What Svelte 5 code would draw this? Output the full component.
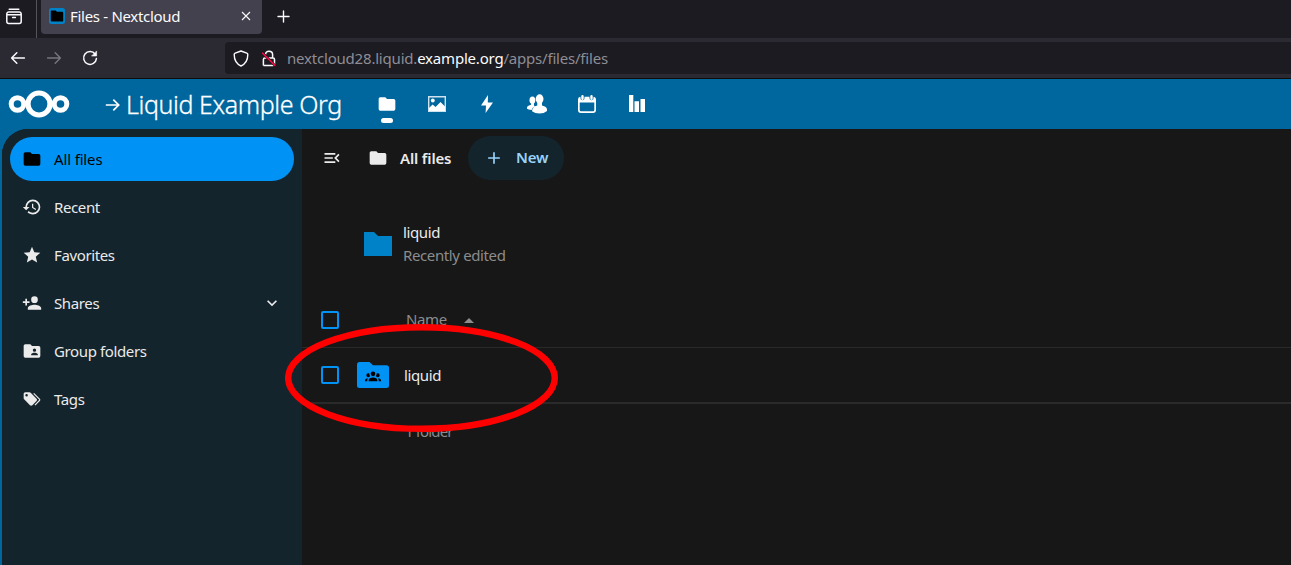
<script>
  const folder = 'M10,4H4C2.89,4 2,4.89 2,6V18A2,2 0 0,0 4,20H20A2,2 0 0,0 22,18V8C22,6.89 21.1,6 20,6H12L10,4Z';
  const group = 'M12,5.5A3.5,3.5 0 0,1 15.5,9A3.5,3.5 0 0,1 12,12.5A3.5,3.5 0 0,1 8.5,9A3.5,3.5 0 0,1 12,5.5M5,8C5.56,8 6.08,8.15 6.53,8.42C6.38,9.85 6.8,11.27 7.66,12.38C7.16,13.34 6.16,14 5,14A3,3 0 0,1 2,11A3,3 0 0,1 5,8M19,8A3,3 0 0,1 22,11A3,3 0 0,1 19,14C17.84,14 16.84,13.34 16.34,12.38C17.2,11.27 17.62,9.85 17.47,8.42C17.92,8.15 18.44,8 19,8M5.5,18.25C5.5,16.18 8.41,14.5 12,14.5C15.59,14.5 18.5,16.18 18.5,18.25V20H5.5V18.25M0,20V18.5C0,17.11 1.89,15.94 4.45,15.6C3.86,16.28 3.5,17.22 3.5,18.25V20H0M24,20H20.5V18.25C20.5,17.22 20.14,16.28 19.55,15.6C22.11,15.94 24,17.11 24,18.5V20Z';
  const nav = [
    { label: 'All files', icon: folder, active: true },
    { label: 'Recent', icon: 'M13.5,8H12V13L16.28,15.54L17,14.33L13.5,12.25V8M13,3A9,9 0 0,0 4,12H1L4.96,16.03L9,12H6A7,7 0 0,1 13,5A7,7 0 0,1 20,12A7,7 0 0,1 13,19C11.07,19 9.32,18.21 8.06,16.94L6.64,18.36C8.27,20 10.5,21 13,21A9,9 0 0,0 22,12A9,9 0 0,0 13,3' },
    { label: 'Favorites', icon: 'M12,17.27L18.18,21L16.54,13.97L22,9.24L14.81,8.62L12,2L9.19,8.62L2,9.24L7.45,13.97L5.82,21L12,17.27Z' },
    { label: 'Shares', expandable: true, icon: 'M15,14C12.33,14 7,15.33 7,18V20H23V18C23,15.33 17.67,14 15,14M6,10V7H4V10H1V12H4V15H6V12H9V10M15,12A4,4 0 0,0 19,8A4,4 0 0,0 15,4A4,4 0 0,0 11,8A4,4 0 0,0 15,12Z' },
    { label: 'Group folders', icon: 'M19,17H11V16C11,14.67 13.67,14 15,14C16.33,14 19,14.67 19,16M15,9A2,2 0 0,1 17,11A2,2 0 0,1 15,13A2,2 0 0,1 13,11C13,9.89 13.9,9 15,9M20,6H12L10,4H4C2.89,4 2,4.89 2,6V18A2,2 0 0,0 4,20H20A2,2 0 0,0 22,18V8C22,6.89 21.1,6 20,6Z' },
    { label: 'Tags', icon: 'M5.5,9A1.5,1.5 0 0,0 7,7.5A1.5,1.5 0 0,0 5.5,6A1.5,1.5 0 0,0 4,7.5A1.5,1.5 0 0,0 5.5,9M17.41,11.58C17.77,11.94 18,12.44 18,13C18,13.55 17.78,14.05 17.41,14.41L12.41,19.41C12.05,19.77 11.55,20 11,20C10.45,20 9.95,19.78 9.58,19.41L2.59,12.42C2.22,12.05 2,11.55 2,11V6C2,4.89 2.89,4 4,4H9C9.55,4 10.05,4.22 10.41,4.58L17.41,11.58M13.54,5.71L14.54,4.71L21.41,11.58C21.78,11.94 22,12.45 22,13C22,13.55 21.78,14.05 21.42,14.41L16.04,19.79L15.04,18.79L20.75,13L13.54,5.71Z' }
  ];
</script>

{#snippet icon(d, size = 20)}
  <svg class="icon" width={size} height={size} viewBox="0 0 24 24" fill="currentColor"><path {d} /></svg>
{/snippet}

{#snippet checkbox()}
  <svg class="check" width="18" height="18" viewBox="0 0 18 18"><rect x="1" y="1" width="16" height="16" rx="1" fill="none" stroke="#0092f4" stroke-width="2" /></svg>
{/snippet}

<div class="window">
  <div class="tabs">
    <div class="recent">
      <svg width="18" height="18" viewBox="0 0 18 18" fill="none" stroke="#fbfbfe" stroke-width="1.5" stroke-linecap="round"><path d="M4.2 1.2H13.8M1.8 6.6V6A2 2 0 0 1 3.8 4H14.2A2 2 0 0 1 16.2 6V13.4A2 2 0 0 1 14.2 15.4H3.8A2 2 0 0 1 1.8 13.4ZM2 6.7H16M7.6 9.4H10.4" /></svg>
    </div>
    <div class="tab">
      <svg width="16" height="16" viewBox="0 0 16 16"><rect width="16" height="16" rx="2.5" fill="#0082c9" /><path d="M2.4 2.4H6.7L7.9 3.7H13.4Q14.2 3.7 14.2 4.5V12.7Q14.2 13.6 13.4 13.6H2.6Q1.8 13.6 1.8 12.8V3Q1.8 2.4 2.4 2.4Z" fill="#000" /></svg>
      <span class="tabtitle">Files - Nextcloud</span>
      <svg class="close" width="10" height="10" viewBox="0 0 10 10" stroke="#fbfbfe" stroke-width="1.1"><path d="M1 1L9 9M9 1L1 9" /></svg>
    </div>
    <svg class="newtab" width="13" height="13" viewBox="0 0 13 13" stroke="#fbfbfe" stroke-width="1.4" stroke-linecap="round"><path d="M6.5 1V12M1 6.5H12" /></svg>
  </div>

  <div class="toolbar">
    <svg class="back" width="16" height="14" viewBox="0 0 16 14" fill="none" stroke="#fbfbfe" stroke-width="1.5" stroke-linecap="round" stroke-linejoin="round"><path d="M14.4 7H1.6M6.8 1.8L1.6 7L6.8 12.2" /></svg>
    <svg class="fwd" width="16" height="14" viewBox="0 0 16 14" fill="none" stroke="#77767d" stroke-width="1.4" stroke-linecap="round" stroke-linejoin="round"><path d="M1.6 7H14.4M9.2 1.8L14.4 7L9.2 12.2" /></svg>
    <svg class="reload" width="16" height="16" viewBox="0 0 16 16" fill="none" stroke="#fbfbfe" stroke-width="1.5" stroke-linecap="round"><path d="M13.2 4.2A6.4 6.4 0 1 0 14.4 8.6" /><path d="M14.6 1.3V6H9.9Z" fill="#fbfbfe" stroke-width="0.6" stroke-linejoin="round" /></svg>
    <div class="url">
      <svg width="16" height="17" viewBox="0 0 16 17" fill="none" stroke="#fbfbfe" stroke-width="1.4" stroke-linejoin="round"><path d="M8 1L13.8 3.2Q14.8 3.6 14.8 4.6C14.8 9.6 13 13.8 8 16C3 13.8 1.2 9.6 1.2 4.6Q1.2 3.6 2.2 3.2Z" /></svg>
      <svg class="lock" width="16" height="17" viewBox="0 0 16 17" fill="none" stroke="#fbfbfe" stroke-width="1.5"><path d="M4.6 4.4C4.6 2.4 6 1.2 8 1.2S11.6 2.5 11.6 4.5V8M2.4 15.6V9.5Q2.4 8 3.9 8H12Q13.5 8 13.5 9.5V13.9Q13.5 15.5 12 15.5H2.4" /><path d="M1.2 2.7L14.3 15.8" stroke="#1c1b22" stroke-width="2.6" /><path d="M1.2 2.7L14.3 15.8" stroke="#ff0a45" stroke-width="1.5" /></svg>
      <span class="address">nextcloud28.liquid.<b>example.org</b>/apps/files/files</span>
    </div>
  </div>

  <header>
    <svg class="logo" width="62" height="28" viewBox="0 0 62 28" fill="none" stroke="#fff"><circle cx="31" cy="14" r="11" stroke-width="5.2" /><circle cx="9.5" cy="14" r="6.3" stroke-width="5" /><circle cx="52.5" cy="14" r="6.3" stroke-width="5" /></svg>
    <svg class="arrow" width="16" height="14" viewBox="0 0 16 14" fill="none" stroke="#fff" stroke-width="1.7"><path d="M.8 7H13.6M8.3 1.7L13.7 7L8.3 12.3" /></svg>
    <span class="org">Liquid Example Org</span>
    <div class="apps">
      <div class="app"><svg width="20" height="20" viewBox="0 0 24 24" fill="#fff"><path d={folder} /></svg><i></i></div>
      <div class="app"><svg width="20" height="20" viewBox="0 0 20 20"><path fill="none" stroke="#cfe2ee" stroke-width="1.4" d="M1.7 2.7H18.3V17.3H1.7Z" /><circle cx="5.8" cy="6.5" r="1.9" fill="#fff" /><path fill="#fff" d="M2 17V14L5.6 10.4L8.6 13L13.5 8L18 12.6V17Z" /></svg></div>
      <div class="app"><svg width="20" height="20" viewBox="0 0 20 20"><path fill="#fff" d="M11 1L4 11.5H9L8.6 19L16 8.5H10.8Z" /></svg></div>
      <div class="app"><svg width="22" height="20" viewBox="0 0 22 20" fill="#fff"><ellipse cx="6.4" cy="6.2" rx="2.9" ry="3.6" /><path d="M5 9H8V11.5L9 12.6Q6.2 13.6 5.6 16Q2 15.8 1 14.8Q.3 11.8 5 10.8Z" /><ellipse cx="13.6" cy="5" rx="3.9" ry="4.7" /><path d="M11.3 8H16V11.4Q21 12.5 21 15.4V17Q18 19.5 13.5 19.5T6 17.2Q6.2 12.8 11.3 11.5Z" /></svg></div>
      <div class="app"><svg width="20" height="20" viewBox="0 0 20 20"><path fill="#fff" fill-rule="evenodd" d="M4 2.7H16Q19 2.7 19 5.7V16Q19 19 16 19H4Q1 19 1 16V5.7Q1 2.7 4 2.7ZM2.7 8.6V16Q2.7 17.3 4 17.3H16Q17.3 17.3 17.3 16V8.6Z" /><path stroke="#00679e" stroke-width="4" stroke-linecap="round" d="M5.5 2V4.2M14.5 2V4.2" /><path stroke="#fff" stroke-width="2.4" stroke-linecap="round" d="M5.5 2.2V4.8M14.5 2.2V4.8" /></svg></div>
      <div class="app"><svg width="20" height="20" viewBox="0 0 20 20" fill="#fff"><path d="M2 1H6.3V18H2ZM7.5 7.3H12V18H7.5ZM13.5 5H18V18H13.5Z" /></svg></div>
    </div>
  </header>

  <div class="body">
    <nav>
      {#each nav as item}
        <div class="item" class:active={item.active}>
          {@render icon(item.icon)}
          <span>{item.label}</span>
          {#if item.expandable}<div class="chev">{@render icon('M7.41,8.58L12,13.17L16.59,8.58L18,10L12,16L6,10L7.41,8.58Z')}</div>{/if}
        </div>
      {/each}
    </nav>
    <main>
      <div class="crumbs">
        {@render icon('M21,15.61L19.59,17L14.58,12L19.59,7L21,8.39L17.44,12L21,15.61M3,6H16V8H3V6M3,13V11H13V13H3M3,18V16H16V18H3Z')}
        <div class="here">{@render icon(folder)}<b>All files</b></div>
        <div class="new">{@render icon('M19,13H13V19H11V13H5V11H11V5H13V11H19V13Z')}<b>New</b></div>
      </div>
      <div class="suggest">
        <svg width="28" height="24" viewBox="0 0 28 24"><path fill="#0082c9" d="M0 0H10L14 4H28V24H0Z" /></svg>
        <div><div class="name">liquid</div><div class="muted">Recently edited</div></div>
      </div>
      <div class="row head">{@render checkbox()}<span class="col">Name</span>{@render icon('M7,15L12,10L17,15H7Z', 24)}</div>
      <div class="row file">
        {@render checkbox()}
        <svg class="gf" width="32" height="26" viewBox="0 0 32 26"><path fill="#0092f4" d="M2.5 0H12.5L16 3.3H29.5Q32 3.3 32 5.8V23.5Q32 26 29.5 26H2.5Q0 26 0 23.5V2.5Q0 0 2.5 0Z" /><path d={group} transform="translate(8 5.8) scale(.667)" /></svg>
        <span class="col">liquid</span>
      </div>
      <div class="row foot"><span class="col">1 folder</span></div>
    </main>
  </div>
  <svg class="ring" width="274" height="110" viewBox="0 0 274 110"><ellipse cx="136.5" cy="55" rx="133.3" ry="50.8" fill="none" stroke="#f00" stroke-width="6.5" /></svg>
</div>

<style>
  :global(body) { background: #171717; overflow: hidden; }
  .window { position: relative; width: 1291px; height: 565px; display: flex; flex-direction: column; overflow: hidden; background: #00679e; font: 15px/24px "Noto Sans", sans-serif; letter-spacing: -.38px; color: #ebebeb; white-space: nowrap; }
  svg { display: block; flex: none; }
  .tabs { height: 38px; flex: none; background: #1c1b22; display: flex; }
  .recent { width: 37px; flex: none; border-right: 1px solid #55545c; padding: 8px 0 0 5px; box-sizing: border-box; }
  .tab { margin-left: 4px; width: 221px; height: 34px; box-sizing: border-box; background: #42414d; border-radius: 0 0 4px 4px; display: flex; align-items: center; padding: 0 11px 2px 8px; }
  .tabtitle { margin-left: 5px; color: #fbfbfe; letter-spacing: -.3px; }
  .close { margin-left: auto; }
  .newtab { margin: 10px 0 0 15px; }
  .toolbar { height: 40px; flex: none; background: #2b2a33; border-bottom: 1px solid #0c0c0d; display: flex; align-items: center; padding-left: 10px; }
  .fwd { margin-left: 20px; }
  .reload { margin-left: 20px; }
  .url { flex: 1; height: 32px; margin-left: 127px; background: #1c1b22; border-radius: 4px 0 0 4px; display: flex; align-items: center; padding-left: 8px; }
  .lock { margin-left: 12px; }
  .address { margin-left: 10px; color: #8e8d94; letter-spacing: -.2px; }
  .address b { color: #fbfbfe; font-weight: 400; }
  header { height: 50px; flex: none; display: flex; align-items: center; color: #fff; padding-left: 8px; }
  .logo { margin-bottom: 1px; }
  .arrow { margin: 2px 0 0 35px; }
  .org { width: 216px; margin-left: 5px; font-size: 25px; line-height: 40px; font-weight: 300; letter-spacing: -.4px; -webkit-text-stroke: .3px #fff; }
  .apps { display: flex; margin-left: 20px; height: 50px; }
  .app { width: 50px; display: flex; flex-direction: column; align-items: center; padding-top: 15px; box-sizing: border-box; }
  .app i { width: 12px; height: 5px; border-radius: 3px; background: #fff; margin-top: 4px; }
  .body { flex: 1; display: flex; margin-left: 2px; background: #171717; border-radius: 26px 0 0 0; overflow: hidden; }
  nav { width: 300px; flex: none; background: #14242c; padding: 8px; box-sizing: border-box; display: flex; flex-direction: column; gap: 4px; }
  .item { height: 44px; display: flex; align-items: center; padding: 0 12px; gap: 12px; border-radius: 22px; }
  .active { background: #0092f4; color: #000; letter-spacing: -.15px; }
  .chev { margin-left: auto; }
  main { flex: 1; }
  .crumbs { display: flex; align-items: center; height: 44px; margin: 7px 0 0 20px; }
  .here { display: flex; align-items: center; gap: 12px; margin-left: 26px; width: 100px; }
  b { font-weight: 600; letter-spacing: -.15px; }
  .address b { letter-spacing: inherit; }
  .new b { padding-bottom: 2px; }
  .new { height: 44px; width: 96px; box-sizing: border-box; border-radius: 22px; padding-left: 16px; display: flex; align-items: center; gap: 12px; background: #14242c; color: #99d3fb; }
  .suggest { margin: 41px 0 0 62px; height: 46px; display: flex; align-items: center; gap: 11px; line-height: 23px; }
  .muted { color: #8c8c8c; }
  .row { display: flex; align-items: center; box-sizing: border-box; height: 56px; padding-left: 19px; }
  .head { height: 55px; margin-top: 26px; border-bottom: 1px solid #2a2a2a; color: #8c8c8c; }
  .head .col { margin: 0 10px 0 67px; padding-bottom: 2px; }
  .file { border-bottom: 2px solid #2a2a2a; }
  .gf { margin-left: 18px; }
  .file .col { margin-left: 15px; }
  .foot { color: #8c8c8c; padding: 0 0 2px 103px; letter-spacing: -.85px; }
  .ring { position: absolute; left: 285px; top: 323px; }
</style>
